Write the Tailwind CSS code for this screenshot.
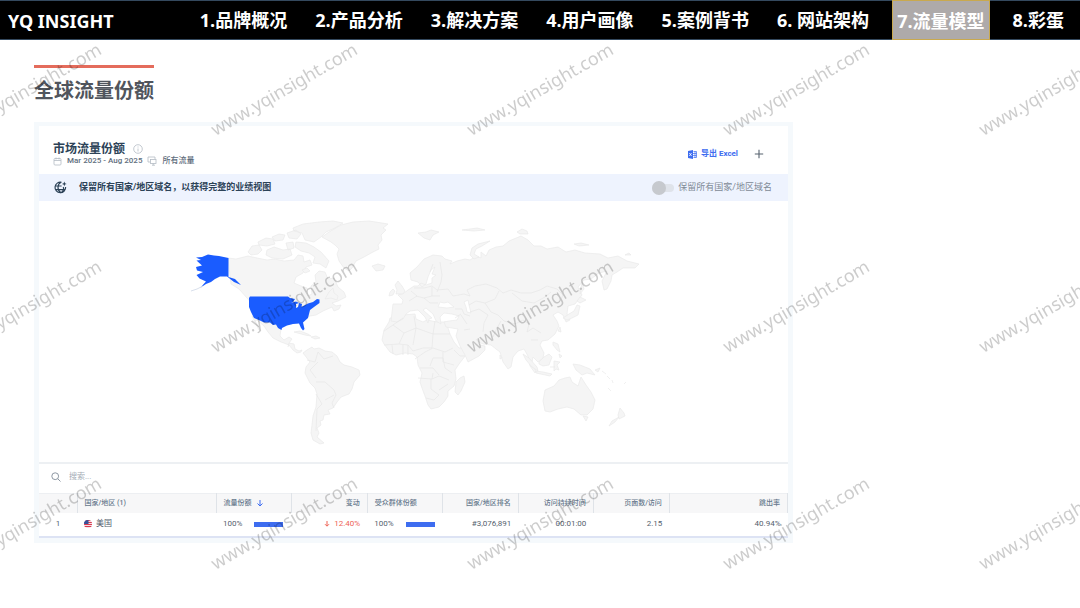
<!DOCTYPE html>
<html lang="zh-CN">
<head>
    <meta charset="UTF-8">
    <meta name="viewport" content="width=device-width, initial-scale=1.0">
    <title>YQ INSIGHT - 流量模型</title>
    <script src="https://cdn.jsdelivr.net/npm/@tailwindcss/browser@4"></script>
</head>
<body class="relative min-h-screen bg-white font-['Open_Sans','Noto_Sans_CJK_SC',sans-serif]">
    <!-- Navigation -->
    <header class="flex h-10 items-center justify-between border-y border-[#34495e] bg-black pr-4 pl-2 text-lg font-bold whitespace-nowrap text-white">
        <a href="#" class="pt-px font-['Noto_Sans','Noto_Sans_CJK_SC',sans-serif]">YQ INSIGHT</a>
        <nav class="flex h-10 items-center gap-7 leading-[42px]">
            <a href="#brand">1.品牌概况</a>
            <a href="#product">2.产品分析</a>
            <a href="#solution">3.解决方案</a>
            <a href="#persona">4.用户画像</a>
            <a href="#cases">5.案例背书</a>
            <a href="#site">6. 网站架构</a>
            <a href="#traffic" aria-current="page" class="-mx-[5px] h-10 border border-[#c9a94f] bg-[#aeaaaa] px-1 leading-10">7.流量模型</a>
            <a href="#bonus">8.彩蛋</a>
        </nav>
    </header>

    <main class="px-[34px] pt-[25px]">
        <h1 class="inline-block border-t-[3px] border-[#e46c5c] pt-[9px] text-xl leading-7 font-bold text-[#50555d]">全球流量份额</h1>

        <!-- Market share card -->
        <div class="mt-[17px] w-3/4 bg-[#f5f9fc] p-[5px] pt-1 font-[Roboto,'Noto_Sans_CJK_SC',sans-serif] text-[#2c4257]">
            <section class="border-b-2 border-[#dde3f4] bg-white">
                <div class="flex h-12 items-center justify-between pt-2 pr-5 pl-[14px]">
                    <div>
                        <h2 class="flex items-center gap-2 text-xs leading-[14px] font-bold">
                            市场流量份额
                            <svg class="size-[10px] text-[#b4bbc4]" viewBox="0 0 10 10" fill="none" stroke="currentColor" stroke-width=".8"><circle cx="5" cy="5" r="4.3"/><path d="M5 4.5v3M5 2.5v1"/></svg>
                        </h2>
                        <p class="flex items-center gap-[5px] text-[8px] leading-[10px] font-medium text-[#5f6e7d]">
                            <svg class="size-[9px] text-[#b4bbc4]" viewBox="0 0 9 9" fill="none" stroke="currentColor" stroke-width=".8"><rect x="1" y="1.5" width="7" height="6.5" rx="1"/><path d="M1 3.5h7M3 .5v2M6 .5v2"/></svg>
                            Mar 2025 - Aug 2025
                            <svg class="size-[10px] text-[#b4bbc4]" viewBox="0 0 10 10" fill="none" stroke="currentColor" stroke-width=".8"><path d="M3 6H1V1h7v2"/><rect x="3.5" y="3.5" width="5.5" height="4"/><path d="M5 9.2h3M6.2 7.5v1.700"/></svg>
                            所有流量
                        </p>
                    </div>
                    <div class="flex items-center gap-3">
                        <button type="button" class="flex items-center gap-1 text-[8px] font-bold text-[#3e6df0]">
                            <svg class="size-[9px]" viewBox="0 0 9 9"><path fill="#3e6df0" d="M0 1 5 0v9L0 8z"/><path d="M5.5 1.5h3v6h-3M5 3.5h3.5M5 5.5h3.5M7 1.5v6" fill="none" stroke="#3e6df0" stroke-width=".7"/><path d="m1.3 3 2.3 3m0-3L1.3 6" stroke="#fff" stroke-width=".8"/></svg>
                            导出 Excel
                        </button>
                        <button type="button" aria-label="添加" class="p-1">
                            <svg class="size-[10px] text-[#57636f]" viewBox="0 0 10 10" fill="none" stroke="currentColor" stroke-width="1.1"><path d="M5 .8v8.4M.8 5h8.4"/></svg>
                        </button>
                    </div>
                </div>

                <!-- Domain banner -->
                <div class="flex h-[27px] items-center bg-[#eef3fe] pr-4 pl-[15px] text-[9px]">
                    <svg class="size-[13px] text-[#2c4257]" viewBox="0 0 13 13" fill="none" stroke="currentColor" stroke-width="1.2"><path d="M7.5 1.3A5.3 5.3 0 1 0 11.6 6M1.4 5h6.2M1.4 8.7h9.4M7 1.2c-4 2-4 8.5 0 10.6M6.3 12c3-1.5 3.7-4 3-6"/><path d="m10.3.5.7 1.7 1.7.7-1.7.7-.7 1.7-.7-1.7-1.7-.7 1.7-.7z" fill="currentColor" stroke="none"/></svg>
                    <p class="ml-3 font-bold">保留所有国家/地区域名，以获得完整的业绩视图</p>
                    <label class="ml-auto flex items-center gap-1 text-[#7f8a96]">
                        <input type="checkbox" class="h-2 w-[22px] appearance-none rounded-full bg-[#dfe3ea] before:relative before:-top-[3px] before:block before:size-[14px] before:rounded-full before:bg-[#c6c9ce]">
                        保留所有国家/地区域名
                    </label>
                </div>

                <!-- World map -->
                <svg class="block w-full" viewBox="39 201 749 261" role="img" aria-label="世界地图" stroke-linejoin="round">
                    <g fill="#f5f5f5" stroke="#e9e9e9" stroke-width=".7">
                        <!-- Canada and the arctic islands -->
                        <path d="M228 258l8 1 12-3 9 2 10 2 8-1 9 2 10-1 4-5 5 1 1 6 6-2 2 5-6 2-3 6-7 4-2 6 7 3 6 2 1 8 4-2-1-8 5-4-1-7 4-4 6 1 3 7 6-1 4 9 6 5 2 5-8 4-6 2 4 3 5-1-2 4-5 2-2-4-9 4-7 4-6 1-4 1-3-7-7-3h-41l-8-9-8-9-8-5z"/>
                        <path d="M248 252l4-6 7-1 3 5-4 4-7 1zM258 242l8-4 7 1 2 5-8 2-8-1zM267 250l7-3 9 3 7-1 2 6-9 4-11-1-6-3zM272 237l7-3 6 1-2 5-8 1zM286 243l7-1 1 6-6 2zM287 233l9-3 5 4-4 5-8-1zM293 228l10-4 16-2 14-1 10 2-8 5-9 4-5 5-7 5-9-2-3-7-8-2zM296 242l10 1 8 4 7 5 8 9-3 7-6-4-7-1 2-6-6-4-8-2-6-4zM302 270l5-2 3 3-5 2z"/>
                        <path d="M325 299l4-7 4-4 1 5 4 3-1 4-6-2z"/>
                        <!-- Greenland -->
                        <path d="M322 237l7-5 12-7 12-3 16-1 13 2 6 1-5 4 3 2-5 5 1 5-4 5 1 4-6 3-9 5-8 4-4 7-3 3-5-3-5-7-2-7 2-5-4-4-4-3z"/>
                        <path d="M372 266l6-2 7 2-2 4-7 1z"/>
                        <!-- Mexico, Central America and the Caribbean -->
                        <path d="M252 316l8 4 10 3 6 2 5 4-1 7 4 4 5-3 3 2-3 4 5 1 1 5 4 2 3-1-1 2-4 1-4-3-4-5-8-3-8-4-5-6-4-6-7-6-2 1 6 10-2-1-5-10zM294 332l6-1 8 3 3 2-6-1zM311 337l5-1 4 2-5 1z"/>
                        <!-- South America -->
                        <path d="M303 353l4-3 5-3 2 2 5-1 6 3 7 1 5 4 3 6 4 3 8 2 7 3 1 5-6 7-2 7-3 5-8 3-4 5-4 6-5 2 2 4-6 1-1 5-3 1 1 4-4 3 2 5-2 4 7 6-4 1-7-4-2-7 1-8 1-9 3-9 1-13-2-6-5-5-5-10 1-6 4-5z"/>
                        <!-- Africa -->
                        <path d="M390 318l5 0 8-3 12-1 1 5 7 3 4-2 10 2 9 0 1 3 3 9 4 8 5 6 9-1-2 8-7 9-4 6 1 9-2 7-6 5 0 5-4 6-5 5-8 2-3-4-3-9-3-8-2-6 2-9-4-8-1-8-4-3-8-1-9 2-6-3-6-8-2-4 2-10 5-8z"/>
                        <path d="M456 382l4-4 4-2 1 6-4 9-3 4-3-3z"/>
                        <!-- Europe and Asia -->
                        <path d="M393 304l9 0 1-4-5-5 6-2 4-3 6-4 4 0 3-3 5 2 6-2 0-5 4-3-4-1 3-7-4 3-3 7-2 7-4 3-4-5-7-2-1-7 7-6 7-8 9-4 9 1 3 3 7 2-2 3 7-3 8-2 5 1 6-4 5 2 0-6 5 4 3-6 7-3 7-1 6-5 12-5 7 4 6 6 7 0 6 3 11-2 8 5 9-2 10 3 15 1 8 4 10-2 9 5 12 3-4 4-12 0-6 4-5 3-1 6-4 8-3 1-2-9 5-10-8 2-8 6-7 1-6 7 4 8-7 9-7 2-1 8 3 6-4 2-3-7-5-3-5 3 4 6 2 5-4 8-7 6-6 1-2 4 4 8-1 5-5 4-5-5-1 5 4 9-1 2-5-7-2-10-4-7-6 2-5 6-2 10-3 2-5-7-3-10-4-3-5-4-8-1-4-2-3-3 4 6 5 1 0 4-6 6-11 6-3-7-5-9-4-10 2-7-12-2-2-5 5-1 8-1 2-4-7-2-8-1-4 4 1 7-5-3-3-7-7-6-3 2 9 8-3 1-1 4-3-6-7-7-8 1-4 3-3 5-6 3-6-1z"/>
                        <path d="M396 294l1-4-2-5 3-4 4 5 3 5-2 3zM390 292l3-3 2 2-2 4-4 1zM418 233l8-1 5-2 8 2-6 3-3 5-6-2zM462 230l8-1 7-1 8 2-11 1zM470 255l2-7 6-4 12-3-8 5-6 3-2 5 5 3-5 2zM517 232l5-3 5 2 1 3-8 0zM574 244l7-1 8 2-10 1zM625 255l4-2 2 2zM563 318l6-4 5-3 3-6 3 1-2 9-6 3-5 2zM577 301l3-4 6 3-6 3zM580 294l2-12 2 7z"/>
                        <!-- Southeast Asia -->
                        <path d="M523 354l6 4 8 9 1 4-6-4-6-7zM536 371l7 1 9 2-2 2-14-3zM539 362l5-5 5-3 3 3-3 8-6 1-4-2zM554 361l6 1-3 3 2 5-3-1-2 2zM553 342l5 2 2 8-3-2-4-5zM559 354l3 2-2 2zM558 331l2-4 1 5zM573 364l7 1 10 4 5 6-8-2-5 2-6-5zM595 370l5-2-2 4zM500 355l2 3-2 1zM602 371l4 3M607 376l3 3"/>
                        <!-- Australia and New Zealand -->
                        <path d="M545 390l9-4 5-6 6-2 5-1 2 5 6 4 3-9 5 8 5 7 4 8-2 9-6 6-6 0-7-6-7-2-9 2-8 3-5-1-2-10zM583 416l5 1-2 4zM620 408l4 5 1 3-6 3-1-4zM619 417l-4 5-6 4 3-5zM608 388l3 3M626 382l-2 2M612 380l1 3"/>
                    </g>
                    <g fill="#fff" stroke="#e9e9e9" stroke-width=".7">
                        <path d="M438 307l2-5 4 1 4-1 6 5-7 1zM464 302l4-2 1 5 2 8-4-1-1-5z"/>
                    </g>
                    <!-- Borders -->
                    <path fill="none" stroke="#e6e6e6" stroke-width=".7" d="M384 331l9-6 10-7M393 325l11 8 12-5-2-12M416 328l17 6 2-13M433 334h17M404 333l-5 11-15 1M399 344l9 1 5 6 10-3 9 0 1-14M413 345l3-17M392 345l1 9M403 345l0 10M408 345l0 10M415 359l10-7 8-4 12 4 8-4M420 368h13l6 7M433 358l-3 8M433 358h10l2 10 7 5M418 378l14 1 1-6M432 379l7-3 10 4M431 379l0 10 8 6-5 5-8-2M439 390l9-6M443 352l0 10 11 3M454 350l6 6 5 0M440 262l2 13-1 7-4 10M430 272l3-8M414 288l10 0 8-2 5 4 11-1 5 7 11-2M432 287l0 9-8 2-8-2M424 298l6 5 8 0M411 291l6 5-8 5M432 296h8M464 294l6 2-3-6 8-4 11-2 11 4 6 5 8-3 10 3 10 0 9-3 7-4 10 3 6 6-2 4M499 291l-4 8-10 4-9-2-7 4M512 293l10 8 12 2 11-6 6-5M485 303l6 9 7 3 6 6 11 3 8-4 6 4-2 8M470 312l9-3 9 6-4 8-1 9M455 309l7 0 2 5 6 2M455 318l6-4M461 315l6 9M464 330l6-1M493 337l4-9 4-7M527 332l6-4 8 5M531 340l7 0M307 360l8 2 3-10M318 352l6 7 9-3M318 362l-8 8 6 8M316 382l9 0 9 8 2 5-4 8 2 5M316 394l6 10-5 5-1 22M325 400l9-5M262 319l8 3M289 343l-1 4M232 279l8 5M550 367h5"/>
                    <!-- United States -->
                    <g fill="#1a5cff">
                        <path d="M196 257.500L202 257L208 254.500L214 255.500L219 256L228.500 258V277L235 279L241 285L234 282L227 276.500L220 276.500L215 279L211 282L206 284L200 288L206 281.500L199.500 278.500L196.500 275L203 272L197 270.500L196 267L202 265.500L196.500 260.500L201 260z"/>
                        <path d="M249 298L250 296.500H288L290 298L295 299L293 302L291 303L296 301.500L299 303L296 304V308L298 307L299 303L302 304L301.500 307L308 303.500L313 302L317 299L319.500 299.500L319.500 303L314 307L310 310L308 318L303 322.500L304.500 329L303 330.500L301 328L299 323.500L293 324L287 325.500L282 328L281.500 330L278 328L276 324.500L273 325L270 322.500L264 322.500L260 320.500L254 318L251 312L249 307z"/>
                    </g>
                    <path d="M203 286l-6 3-6 2" fill="none" stroke="#d9e0ec"/>
                </svg>

                <!-- Search -->
                <div class="flex h-[31px] items-center gap-2 border-t-2 border-[#edf0f3] pb-1 pl-3">
                    <svg class="size-[10px] text-[#8d97a2]" viewBox="0 0 10 10" fill="none" stroke="currentColor"><circle cx="4.2" cy="4.2" r="3.4"/><path d="m6.700 6.700 2.800 2.800"/></svg>
                    <input type="search" aria-label="搜索" placeholder="搜索..." class="w-40 text-[8px] outline-none placeholder:text-[#a5acb5]">
                </div>

                <table class="w-full table-fixed text-right text-[8px] text-[#55616e]">
                    <colgroup>
                        <col class="w-[38px]">
                        <col class="w-[139px]">
                        <col class="w-[75px]">
                        <col class="w-[76px]">
                        <col class="w-[75px]">
                        <col class="w-[76px]">
                        <col class="w-[75px]">
                        <col class="w-[76px]">
                        <col class="w-[118px]">
                    </colgroup>
                    <thead class="bg-[#f7f7f8] text-[7px] text-[#66788c]">
                        <tr class="h-[19px] border-t border-[#edeff2] *:border-r *:border-[#dfe3e8] *:px-[7px] *:font-medium">
                            <th aria-label="排名"></th>
                            <th class="text-left">国家/地区 (1)</th>
                            <th class="text-left">
                                <span class="flex items-center gap-1">流量份额
                                    <svg class="size-2 text-[#3e6df0]" viewBox="0 0 8 8" fill="none" stroke="currentColor"><path d="M4 1v6M1.500 4.500 4 7l2.500-2.500"/></svg>
                                </span>
                            </th>
                            <th>变动</th>
                            <th class="text-left">受众群体份额</th>
                            <th>国家/地区排名</th>
                            <th>访问持续时间</th>
                            <th>页面数/访问</th>
                            <th>跳出率</th>
                        </tr>
                    </thead>
                    <tbody>
                        <tr class="h-[23px] *:px-[7px]">
                            <td class="text-center">1</td>
                            <td>
                                <span class="flex items-center gap-1">
                                    <svg class="size-2" viewBox="0 0 8 8"><clipPath id="flag"><circle cx="4" cy="4" r="4"/></clipPath><g clip-path="url(#flag)"><path fill="#f3dfe3" d="M0 0h8v8H0z"/><path stroke="#dc3a50" d="M0 .5h8M0 2.500h8M0 4.500h8M0 6.500h8"/><path fill="#34509a" d="M0 0h4.500v4H0z"/></g></svg>
                                    美国
                                </span>
                            </td>
                            <td>
                                <span class="flex items-center gap-3">100%<span class="h-[5px] w-[29px] shrink-0 bg-[#3e6df0]"></span></span>
                            </td>
                            <td class="text-[#ee6355]">
                                <span class="flex items-center justify-end gap-1">
                                    <svg class="size-[6px]" viewBox="0 0 6 6" fill="none" stroke="currentColor"><path d="M3 0v5M1 3.200l2 2 2-2"/></svg>
                                    12.40%
                                </span>
                            </td>
                            <td>
                                <span class="flex items-center gap-3">100%<span class="h-[5px] w-[29px] shrink-0 bg-[#3e6df0]"></span></span>
                            </td>
                            <td>#3,076,891</td>
                            <td>00:01:00</td>
                            <td>2.15</td>
                            <td>40.94%</td>
                        </tr>
                    </tbody>
                </table>
            </section>
        </div>
    </main>

    <!-- Watermark -->
    <svg class="pointer-events-none absolute inset-x-0 top-10 h-[calc(100%-40px)] w-full" aria-hidden="true">
        <pattern id="watermark" x="-99" y="-59" width="256" height="217" patternUnits="userSpaceOnUse">
            <text x="127" y="114" transform="rotate(-30 128 108)" text-anchor="middle" class="fill-black/20 font-['Noto_Sans'] text-lg">www.yqinsight.com</text>
        </pattern>
        <rect width="100%" height="100%" fill="url(#watermark)"/>
    </svg>
</body>
</html>
